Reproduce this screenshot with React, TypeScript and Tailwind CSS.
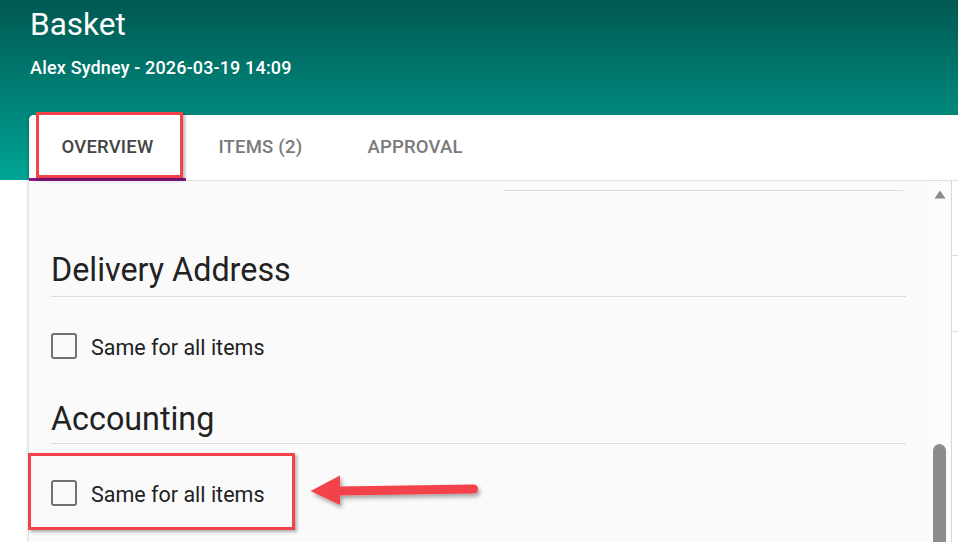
import React from 'react'

function Tab({ label, active }: { label: string; active?: boolean }) {
  return (
    <div className="relative flex items-center px-[32.5px] h-full">
      <span
        className={`text-[18.5px] font-['Roboto_Medium','Roboto',sans-serif] font-medium tracking-[0.2px] ${
          active ? 'text-[#454545]' : 'text-[#7a7a7a]'
        }`}
      >
        {label}
      </span>
      {active && <div className="absolute left-0 right-0 bottom-[-1px] h-[3px] bg-[#8a1580]" />}
    </div>
  )
}

function Checkbox({ label }: { label: string }) {
  return (
    <label className="flex items-center gap-[14px]">
      <span className="w-[26px] h-[26px] rounded-[3px] border-2 border-[#727272] bg-[#fafafa]" />
      <span className="relative top-[2px] text-[21.5px] leading-[26px] text-[#222]">{label}</span>
    </label>
  )
}

function Heading({ children, className }: { children: React.ReactNode; className?: string }) {
  return (
    <div className={`border-b border-[#dcdcdc] ${className ?? ''}`}>
      <h2 className="text-[32.3px] leading-[40px] text-[#222] font-normal">{children}</h2>
    </div>
  )
}

export default function App() {
  return (
    <div className="relative w-[958px] h-[542px] overflow-hidden bg-white font-['Roboto',sans-serif]">
      {/* Header */}
      <header className="h-[180px] bg-gradient-to-b from-[#005952] to-[#00a596] px-[30px] pt-[5px] text-white">
        <h1 className="text-[31.5px] leading-[40px]">Basket</h1>
        <p className="text-[18px] font-['Roboto_Medium','Roboto',sans-serif] font-medium tracking-[0.17px] leading-[24px] mt-[11px]">
          Alex Sydney - 2026-03-19 14:09
        </p>
      </header>

      {/* Card */}
      <div className="-mt-[65px] ml-[29px] h-[427px] flex flex-col rounded-tl-[5px] bg-white shadow-[-1px_0_3px_rgba(0,0,0,0.18)]">
        <nav className="h-[66px] shrink-0 flex border-b border-[#e0e0e0] rounded-tl-[5px] bg-white">
          <Tab label="OVERVIEW" active />
          <Tab label="ITEMS (2)" />
          <Tab label="APPROVAL" />
        </nav>

        <div className="flex flex-1 min-h-0">
          <div className="flex flex-1 bg-[#fafafa]">
            {/* Form content */}
            <div className="flex-1 px-[22px]">
              <div className="flex gap-[25px]">
                <div className="w-[427px]" />
                <div className="w-[400px] h-[10px] border-b border-[#dcdcdc]" />
              </div>

              <Heading className="mt-[59px] pb-[6px]">Delivery Address</Heading>
              <div className="mt-[36px]">
                <Checkbox label="Same for all items" />
              </div>

              <Heading className="mt-[40px] pb-[4px]">Accounting</Heading>
              <div className="mt-[36px]">
                <Checkbox label="Same for all items" />
              </div>
            </div>

            {/* Scrollbar */}
            <div className="w-[23px] bg-[#fbfbfb] flex flex-col items-center pt-[9px]">
              <svg width="12" height="9" viewBox="0 0 12 9">
                <path d="M6 0.5 L11.5 8.5 L0.5 8.5 Z" fill="#8a8a8a" />
              </svg>
              <div className="mt-[245px] w-[13px] flex-1 rounded-t-full bg-[#8c8c8c]" />
            </div>
          </div>

          {/* Neighbouring panel edge */}
          <div className="w-[7px] border-l border-[#d8d8d8] bg-white flex flex-col">
            <div className="h-[75px] border-b border-[#dedede]" />
            <div className="h-[76px] border-b border-[#dedede]" />
          </div>
        </div>
      </div>

      {/* Annotations */}
      <div className="absolute left-[36px] top-[112px] w-[147px] h-[66px] border-[3px] border-[#f2424a] shadow-[2px_2px_3px_rgba(0,0,0,0.3)]" />
      <div className="absolute left-[28px] top-[453px] w-[267px] h-[77px] border-[3px] border-[#f2424a] shadow-[2px_2px_3px_rgba(0,0,0,0.3)]" />
      <svg className="absolute left-[300px] top-[468px]" width="190" height="46" viewBox="0 0 190 46">
        <defs>
          <filter id="sh" x="-10%" y="-30%" width="130%" height="170%">
            <feDropShadow dx="2" dy="3" stdDeviation="2" floodColor="#000" floodOpacity="0.35" />
          </filter>
        </defs>
        <g filter="url(#sh)" fill="#f4434b" stroke="none">
          <path d="M10.5 23 L40 7.5 L40 37 Z" />
          <path d="M38 18.5 L173 16.5 Q178 16.5 178 21 Q178 25.5 173 25.5 L38 27.5 Z" />
        </g>
      </svg>
    </div>
  )
}
